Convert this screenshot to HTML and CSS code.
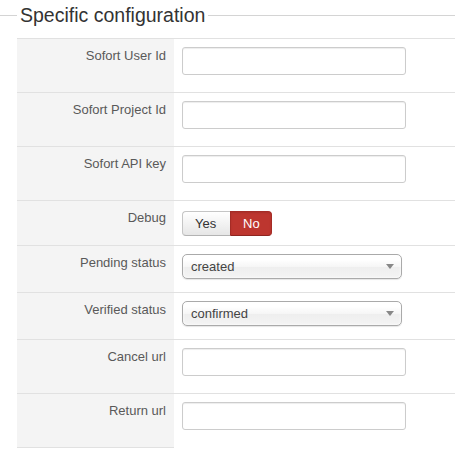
FILE: index.html
```html
<!DOCTYPE html>
<html>
<head>
<meta charset="utf-8">
<link rel="stylesheet" href="styles.css">
</head>
<body>
<fieldset class="config">
  <legend class="config-title">Specific configuration</legend>
  <table class="params">
    <tr>
      <td class="key"><label>Sofort User Id</label></td>
      <td class="val"><input type="text" class="text-input"></td>
    </tr>
    <tr>
      <td class="key"><label>Sofort Project Id</label></td>
      <td class="val"><input type="text" class="text-input"></td>
    </tr>
    <tr>
      <td class="key"><label>Sofort API key</label></td>
      <td class="val"><input type="text" class="text-input"></td>
    </tr>
    <tr>
      <td class="key"><label>Debug</label></td>
      <td class="val">
        <div class="btn-group">
          <span class="btn btn-yes">Yes</span><span class="btn btn-no">No</span>
        </div>
      </td>
    </tr>
    <tr>
      <td class="key"><label>Pending status</label></td>
      <td class="val">
        <div class="chosen"><span class="chosen-text">created</span><span class="chosen-arrow"></span></div>
      </td>
    </tr>
    <tr>
      <td class="key"><label>Verified status</label></td>
      <td class="val">
        <div class="chosen"><span class="chosen-text">confirmed</span><span class="chosen-arrow"></span></div>
      </td>
    </tr>
    <tr>
      <td class="key"><label>Cancel url</label></td>
      <td class="val"><input type="text" class="text-input"></td>
    </tr>
    <tr class="last">
      <td class="key"><label>Return url</label></td>
      <td class="val"><input type="text" class="text-input"></td>
    </tr>
  </table>
</fieldset>
</body>
</html>
```

FILE: styles.css
```css
html, body {
  margin: 0;
  padding: 0;
  background: #fff;
}

body {
  font-family: "Liberation Sans", Arial, sans-serif;
  font-size: 13px;
  line-height: 18px;
  color: #333;
  width: 455px;
  overflow: hidden;
}

.config {
  margin: 3px 0 0 0;
  padding: 0 0 0 17px;
  border: none;
  border-top: 1px solid #d4d4d4;
  min-width: 0;
}

.config-title {
  font-size: 19.5px;
  line-height: 24px;
  padding: 0 3px;
  margin: 0;
  color: #333;
}

.params {
  margin-top: 11px;
  width: 100%;
  border-collapse: collapse;
  border-spacing: 0;
}

.params td {
  border-top: 1px solid #e1e1e1;
  padding: 8px;
  vertical-align: top;
}

.params td.key {
  width: 141px;
  background: #f4f4f4;
  text-align: right;
  color: #595959;
}

.params tr.last td.key {
  border-bottom: 1px solid #e1e1e1;
}

.params td.val {
  padding-left: 8px;
}

.text-input {
  display: block;
  box-sizing: border-box;
  width: 224px;
  height: 28px;
  margin: 0 0 9px 0;
  padding: 4px 6px;
  border: 1px solid #ccc;
  border-radius: 3px;
  background: #fff;
  box-shadow: inset 0 1px 1px rgba(0, 0, 0, 0.075);
  font: inherit;
}

.btn-group {
  display: flex;
  margin: 2px 0 1px 0;
}

.btn {
  box-sizing: border-box;
  height: 25px;
  line-height: 23px;
  padding: 0 12px;
  border: 1px solid #c5c5c5;
  font-size: 13px;
}

.btn-yes {
  color: #333;
  background: linear-gradient(#ffffff, #e6e6e6);
  border-bottom-color: #b3b3b3;
  border-right: none;
  border-radius: 4px 0 0 4px;
  width: 48px;
}

.btn-no {
  color: #fff;
  background: #bd362f;
  border-color: #a52c26;
  border-bottom-color: #8e2520;
  border-radius: 0 4px 4px 0;
  width: 42px;
  box-shadow: inset 0 1px 2px rgba(0, 0, 0, 0.1);
}

.chosen {
  box-sizing: border-box;
  width: 220px;
  height: 25px;
  margin: 0 0 5px 0;
  padding: 0 4px 0 8px;
  border: 1px solid #aaa;
  border-radius: 5px;
  background: linear-gradient(#ffffff 20%, #f6f6f6 50%, #eeeeee 52%, #f4f4f4 100%);
  box-shadow: inset 0 0 3px #fff, 0 1px 1px rgba(0, 0, 0, 0.1);
  display: flex;
  align-items: center;
  justify-content: space-between;
  color: #444;
}

.chosen-text {
  line-height: 23px;
}

.chosen-arrow {
  width: 0;
  height: 0;
  border-left: 4px solid transparent;
  border-right: 4px solid transparent;
  border-top: 5px solid #888;
  margin-right: 3px;
}
```
